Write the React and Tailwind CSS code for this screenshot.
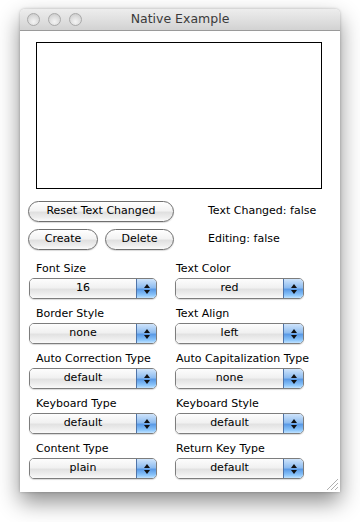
import React from "react";

const font = { fontFamily: '"DejaVu Sans", "Lucida Grande", sans-serif' };

function Select({ value, wide }) {
  return (
    <div
      className={`flex h-[21px] ${wide ? "w-[129px]" : "w-[128px]"} rounded-[5px] border border-[#7d7d7d] overflow-hidden shadow-[0_1px_1px_rgba(0,0,0,0.15)]`}
    >
      <div className="flex-1 flex items-center justify-center text-[11px] text-black bg-[linear-gradient(to_bottom,#fdfdfd_0%,#f1f1f1_45%,#e2e2e2_55%,#eeeeee_80%,#fafafa_100%)]">
        {value}
      </div>
      <div className="w-[20px] flex flex-col items-center justify-center gap-[2px] border-l border-[#4f74a8] bg-[linear-gradient(to_bottom,#cfe4fb_0%,#8fbdf0_45%,#5a9ae6_55%,#8cc6fb_85%,#c2e3ff_100%)]">
        <svg width="6" height="4" viewBox="0 0 6 4"><polygon points="3,0 6,4 0,4" fill="#111" /></svg>
        <svg width="6" height="4" viewBox="0 0 6 4"><polygon points="0,0 6,0 3,4" fill="#111" /></svg>
      </div>
    </div>
  );
}

function Field({ label, value, wide }) {
  return (
    <div className="flex flex-col">
      <div className={`h-[14px] leading-[14px] text-[11px] text-black ${wide ? "pl-[1px]" : "pl-[7px]"}`}>{label}</div>
      <div className="mt-[2px]">
        <Select value={value} wide={wide} />
      </div>
    </div>
  );
}

function Button({ children, w }) {
  return (
    <div
      className={`${w} h-[21px] rounded-full border border-[#6f6f6f] flex items-center justify-center text-[11px] text-black bg-[linear-gradient(to_bottom,#ffffff_0%,#f3f3f3_45%,#e0e0e0_55%,#ececec_80%,#fbfbfb_100%)] shadow-[0_1px_1px_rgba(0,0,0,0.15)]`}
    >
      {children}
    </div>
  );
}

function Light() {
  return (
    <div className="w-[13px] h-[13px] rounded-full border border-[#a9a9a9] bg-[radial-gradient(circle_at_50%_70%,#f4f4f4_0%,#dcdcdc_55%,#c4c4c4_100%)]" />
  );
}

const rows = [
  ["Font Size", "16", "Text Color", "red"],
  ["Border Style", "none", "Text Align", "left"],
  ["Auto Correction Type", "default", "Auto Capitalization Type", "none"],
  ["Keyboard Type", "default", "Keyboard Style", "default"],
  ["Content Type", "plain", "Return Key Type", "default"],
];

export default function App() {
  return (
    <div className="w-[360px] h-[522px] bg-white pt-[9px] pl-[20px]" style={font}>
      <div className="w-[320px] h-[483px] flex flex-col bg-white rounded-t-[5px] shadow-[0_10px_22px_rgba(0,0,0,0.45),0_0_3px_rgba(0,0,0,0.25)] relative">
        <div className="h-[22px] flex items-center rounded-t-[5px] border-b border-[#9a9a9a] bg-[linear-gradient(to_bottom,#ededed_0%,#e0e0e0_50%,#d2d2d2_100%)] relative">
          <div className="flex gap-[8px] pl-[7px]">
            <Light />
            <Light />
            <Light />
          </div>
          <div className="absolute inset-0 flex items-center justify-center text-[12.5px] text-[#3a3a3a]">
            Native Example
          </div>
        </div>
        <div className="ml-[16px] mt-[11px] w-[286px] h-[147px] border border-black bg-white" />
        <div className="mt-[12px] ml-[8px] flex items-center">
          <Button w="w-[146px]">Reset Text Changed</Button>
          <div className="ml-[34px] text-[11px] text-black">Text Changed: false</div>
        </div>
        <div className="mt-[7px] ml-[8px] flex items-center">
          <Button w="w-[70px]">Create</Button>
          <div className="ml-[7px]">
            <Button w="w-[69px]">Delete</Button>
          </div>
          <div className="ml-[34px] text-[11px] text-black">Editing: false</div>
        </div>
        <div className="mt-[12px] ml-[9px] flex flex-col gap-[8px]">
          {rows.map((r) => (
            <div key={r[0]} className="flex gap-[18px]">
              <Field label={r[0]} value={r[1]} />
              <Field label={r[2]} value={r[3]} wide />
            </div>
          ))}
        </div>
        <svg className="absolute right-[1px] bottom-[1px]" width="14" height="14" viewBox="0 0 14 14">
          <line x1="13" y1="2" x2="2" y2="13" stroke="#b0b0b0" strokeWidth="1" />
          <line x1="13" y1="6" x2="6" y2="13" stroke="#b0b0b0" strokeWidth="1" />
          <line x1="13" y1="10" x2="10" y2="13" stroke="#b0b0b0" strokeWidth="1" />
        </svg>
      </div>
    </div>
  );
}
